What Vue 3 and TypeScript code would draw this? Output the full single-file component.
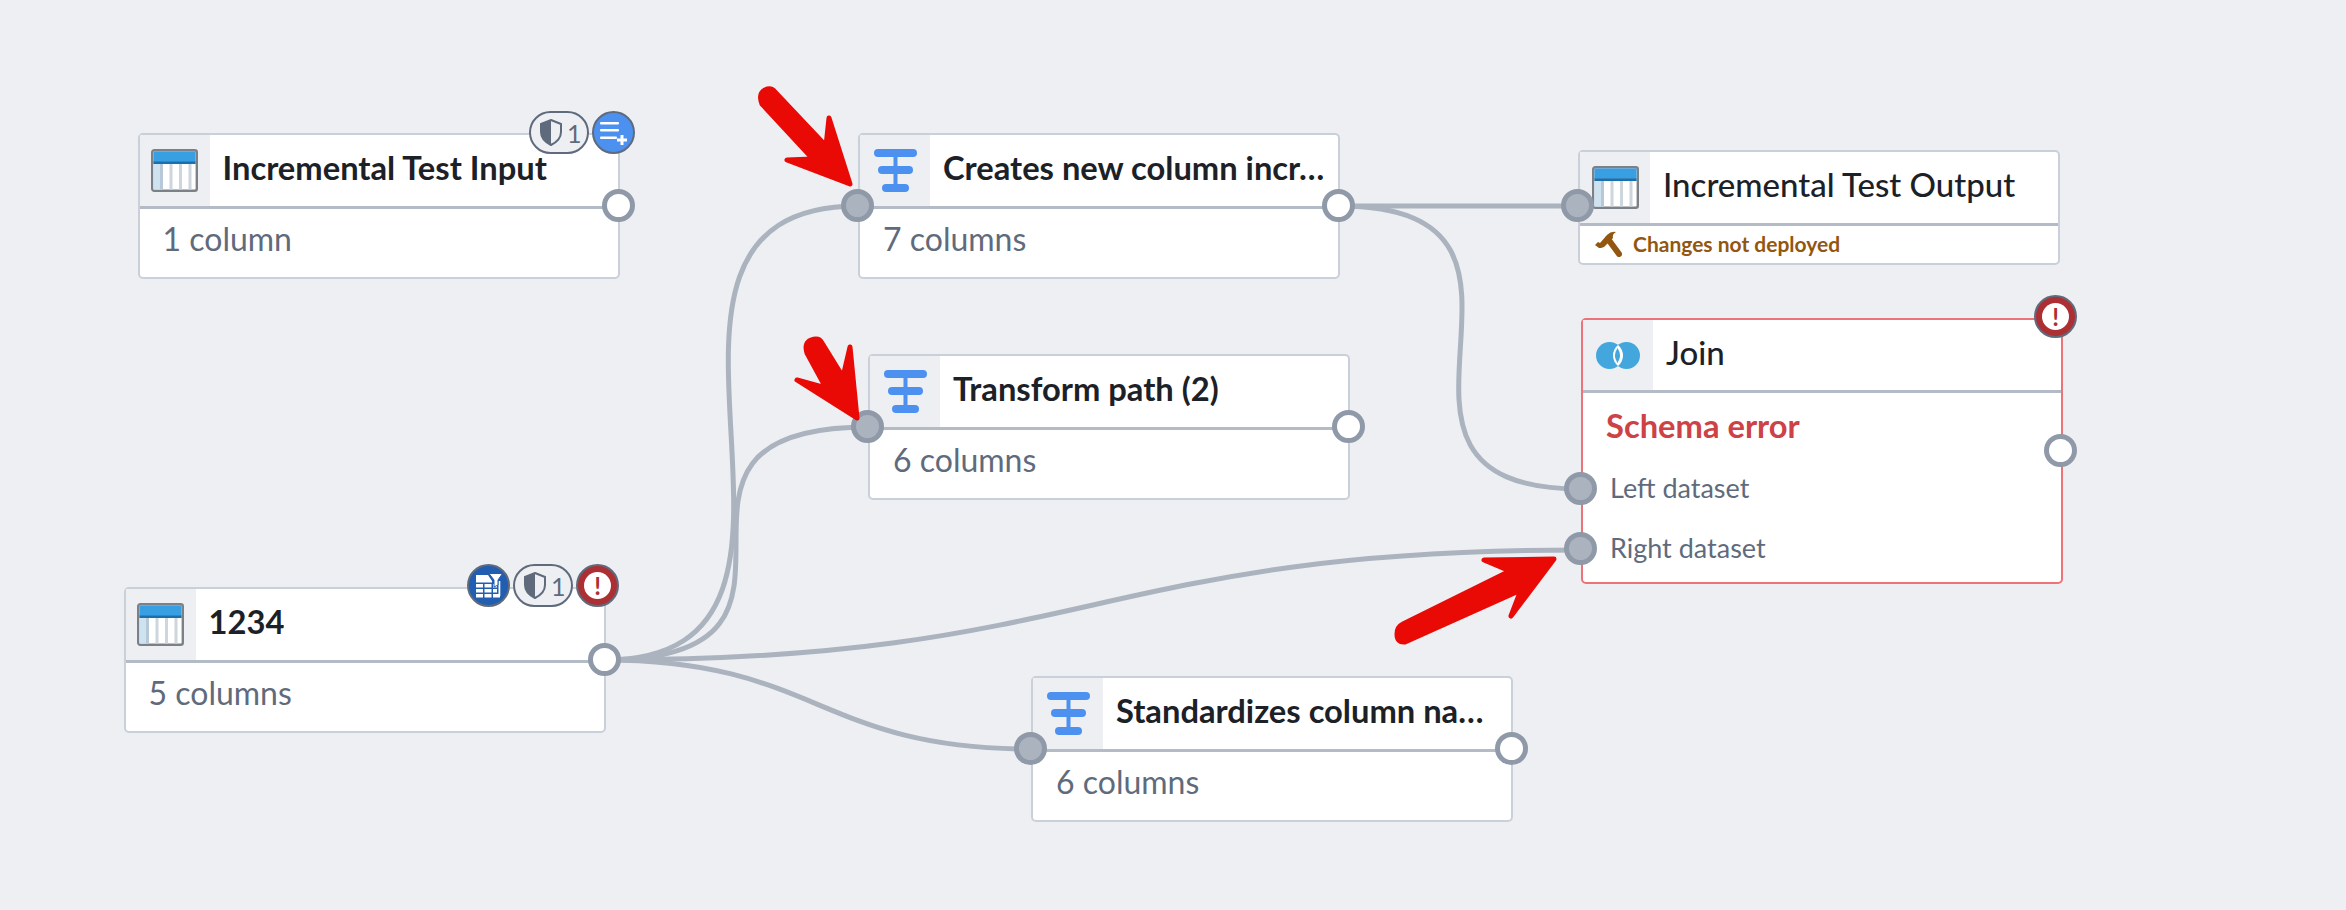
<script setup lang="ts">
// Pipeline graph: node cards sit on a free canvas, edges are drawn below them
type PortKind = 'in' | 'out'

interface Port {
  kind: PortKind
  x: number
  y: number
}

interface GraphNode {
  id: string
  title: string
  icon: 'table' | 'transform'
  x: number
  y: number
  body: string
  ports: Port[]
}

const nodes: GraphNode[] = [
  { id: 'input', title: 'Incremental Test Input', icon: 'table', x: 137.5, y: 133, body: '1 column', ports: [{ kind: 'out', x: 481, y: 73 }] },
  { id: 'creates', title: 'Creates new column incr…', icon: 'transform', x: 858, y: 133, body: '7 columns', ports: [{ kind: 'in', x: 0, y: 73 }, { kind: 'out', x: 481, y: 73 }] },
  { id: 'path', title: 'Transform path (2)', icon: 'transform', x: 868, y: 354, body: '6 columns', ports: [{ kind: 'in', x: 0, y: 73 }, { kind: 'out', x: 481, y: 73 }] },
  { id: 'raw', title: '1234', icon: 'table', x: 123.5, y: 587, body: '5 columns', ports: [{ kind: 'out', x: 481, y: 73 }] },
  { id: 'names', title: 'Standardizes column na…', icon: 'transform', x: 1031, y: 676, body: '6 columns', ports: [{ kind: 'in', x: 0, y: 73 }, { kind: 'out', x: 481, y: 73 }] }
]

const edges: string[] = [
  'M604 660 C884 660 578 206 858 206',
  'M604 660 C868 660 604 427 868 427',
  'M604 660 C1093 660 1093 550 1581 550',
  'M604 660 C818 660 818 749 1031 749',
  'M1339 206 L1579 206',
  'M1339 206 C1600 206 1321 489 1581 489'
]

const arrows: string[] = [
  'M775 92 L826 146 L829 118 L850 184 L787 160 L813 159 L762 104 Q758 94 765 90 Q771 87 775 92 Z',
  'M822 343 L843 377 L850 347 L857 418 L797 380 L826 388 L807 353 Q804 343 811 340 Q819 337 822 343 Z',
  'M1510 571 L1484 560 L1554 559 L1511 616 L1521 590 L1405 642 Q1397 643 1397 634 Q1397 627 1403 624 Z'
]
</script>

<template>
  <div class="canvas">
    <svg class="edges" width="2346" height="910" viewBox="0 0 2346 910" fill="none">
      <path v-for="d in edges" :key="d" :d="d" class="edge" />
    </svg>

    <div
      v-for="n in nodes"
      :key="n.id"
      class="node"
      :style="{ left: n.x + 'px', top: n.y + 'px' }"
    >
      <div class="node-head">
        <div class="icon-cell">
          <svg v-if="n.icon === 'table'" width="47" height="43" viewBox="0 0 47 43">
            <rect x="1.2" y="1.2" width="44.6" height="40.6" rx="2" fill="#fff" stroke="#7c8087" stroke-width="2.4" />
            <rect x="2.4" y="15" width="9" height="25.6" fill="#cfe2f0" />
            <rect x="9" y="15" width="3" height="25.6" fill="#b7c9d8" />
            <rect x="18.5" y="15" width="3" height="25.6" fill="#cdd5dd" />
            <rect x="28" y="15" width="3" height="25.6" fill="#cdd5dd" />
            <rect x="37.5" y="15" width="3" height="25.6" fill="#cdd5dd" />
            <rect x="2.4" y="2.4" width="42.2" height="10" fill="#389fe3" />
            <rect x="2.4" y="12.2" width="42.2" height="2.8" fill="#1a6fae" />
          </svg>
          <svg v-else width="43" height="43" viewBox="0 0 43 43" fill="#4c90f0">
            <rect x="0" y="0" width="43" height="8" rx="4" />
            <rect x="4" y="17" width="35" height="8" rx="4" />
            <rect x="8" y="35" width="27" height="8" rx="4" />
            <rect x="19.5" y="4" width="4" height="35" />
          </svg>
        </div>
        <div class="title">{{ n.title }}</div>
      </div>
      <div class="node-body">{{ n.body }}</div>
      <span
        v-for="p in n.ports"
        :key="p.kind"
        class="port"
        :class="p.kind"
        :style="{ left: p.x + 'px', top: p.y + 'px' }"
      ></span>
    </div>

    <!-- output dataset, header plus deploy footer -->
    <div class="node output">
      <div class="node-head">
        <div class="icon-cell">
          <svg width="47" height="43" viewBox="0 0 47 43">
            <rect x="1.2" y="1.2" width="44.6" height="40.6" rx="2" fill="#fff" stroke="#7c8087" stroke-width="2.4" />
            <rect x="2.4" y="15" width="9" height="25.6" fill="#cfe2f0" />
            <rect x="9" y="15" width="3" height="25.6" fill="#b7c9d8" />
            <rect x="18.5" y="15" width="3" height="25.6" fill="#cdd5dd" />
            <rect x="28" y="15" width="3" height="25.6" fill="#cdd5dd" />
            <rect x="37.5" y="15" width="3" height="25.6" fill="#cdd5dd" />
            <rect x="2.4" y="2.4" width="42.2" height="10" fill="#389fe3" />
            <rect x="2.4" y="12.2" width="42.2" height="2.8" fill="#1a6fae" />
          </svg>
        </div>
        <div class="title medium">Incremental Test Output</div>
      </div>
      <div class="node-foot">
        <svg width="28" height="27" viewBox="0 0 28 27" fill="#935610">
          <path d="M1 15 L4 12 L6 13 L13 5 Q17 1 22 2 Q18 4 19 8 L15 12 L10 17 L7 18 L5 18 Z" />
          <line x1="14" y1="9" x2="25" y2="24" stroke="#935610" stroke-width="6" stroke-linecap="round" />
        </svg>
        <span>Changes not deployed</span>
      </div>
      <span class="port in" style="left: 0; top: 56px"></span>
    </div>

    <!-- join with schema error -->
    <div class="node join">
      <div class="node-head">
        <div class="icon-cell">
          <svg width="44" height="27" viewBox="0 0 44 27">
            <circle cx="13.5" cy="13.5" r="13.5" fill="#43a7dd" />
            <circle cx="30.5" cy="13.5" r="13.5" fill="#43a7dd" />
            <path d="M22 3 A13.5 13.5 0 0 1 22 24 A13.5 13.5 0 0 1 22 3 Z" fill="#fff" />
            <path d="M21.5 6 A13.5 13.5 0 0 1 21.5 21 A13.5 13.5 0 0 1 21.5 6 Z" fill="#43a7dd" />
          </svg>
        </div>
        <div class="title medium">Join</div>
      </div>
      <div class="join-body">
        <div class="schema-error">Schema error</div>
        <div class="input-row">Left dataset</div>
        <div class="input-row">Right dataset</div>
      </div>
      <span class="port in" style="left: 0; top: 171px"></span>
      <span class="port in" style="left: 0; top: 231px"></span>
      <span class="port out" style="left: 480px; top: 133px"></span>
      <span class="badge danger corner"><i>!</i></span>
    </div>

    <!-- status badges over the node corners -->
    <div class="badges" style="left: 529px; top: 111px">
      <span class="pill">
        <svg width="22" height="27" viewBox="0 0 22 27">
          <path d="M11 1 L21 5 V13 Q21 21 11 26 Q1 21 1 13 V5 Z" fill="none" stroke="#5f6b7c" stroke-width="2" />
          <path d="M11 1 V26 Q1 21 1 13 V5 Z" fill="#5f6b7c" />
        </svg>
        <span>1</span>
      </span>
      <span class="badge info">
        <svg width="39" height="39" viewBox="0 0 39 39" fill="#fff">
          <rect x="6" y="9" width="19" height="2.6" rx="1" />
          <rect x="6" y="16" width="19" height="2.6" rx="1" />
          <rect x="6" y="23.5" width="17" height="2.6" rx="1" />
          <path d="M26.5 22 h3 v3.5 h3.5 v3 h-3.5 v3.5 h-3 v-3.5 h-3.5 v-3 h3.5 Z" />
        </svg>
      </span>
    </div>

    <div class="badges" style="left: 467px; top: 564px">
      <span class="badge dark">
        <svg width="28" height="28" viewBox="0 0 28 28" fill="#fff">
          <path d="M1 3 H13 L17 9 V10.5 H1 Z" />
          <path d="M1 12 H8 V15.5 H1 Z M9.5 12 H16.5 V15.5 H9.5 Z M18 12 H22 V15.5 H18 Z" />
          <path d="M1 17 H8 V20.5 H1 Z M9.5 17 H16.5 V20.5 H9.5 Z M18 17 H22 V20.5 H18 Z" />
          <path d="M1 22 H8 V25.5 H1 Z M9.5 22 H16.5 V25.5 H9.5 Z M18 22 H25 V25.5 H18 Z" />
          <rect x="23.5" y="9" width="1.8" height="15" />
          <path d="M14 1.5 H27.5 L23 8 V13 L19 15 V8 Z" stroke="#215db0" stroke-width="1" />
        </svg>
      </span>
      <span class="pill">
        <svg width="22" height="27" viewBox="0 0 22 27">
          <path d="M11 1 L21 5 V13 Q21 21 11 26 Q1 21 1 13 V5 Z" fill="none" stroke="#5f6b7c" stroke-width="2" />
          <path d="M11 1 V26 Q1 21 1 13 V5 Z" fill="#5f6b7c" />
        </svg>
        <span>1</span>
      </span>
      <span class="badge danger"><i>!</i></span>
    </div>

    <svg class="arrows" width="2346" height="910" viewBox="0 0 2346 910">
      <path v-for="d in arrows" :key="d" :d="d" class="arrow" />
    </svg>
  </div>
</template>

<style>
html,
body {
  margin: 0;
  background: #edeff3;
}
</style>

<style scoped>
.canvas {
  position: relative;
  width: 2346px;
  height: 910px;
  background: #edeff3;
  overflow: hidden;
  font-family: Lato, "Noto Sans", sans-serif;
}

.edges,
.arrows {
  position: absolute;
  left: 0;
  top: 0;
}

.arrows {
  pointer-events: none;
}

.edge {
  stroke: #abb3bf;
  stroke-width: 5;
}

.arrow {
  fill: #ea0a05;
  stroke: #ea0a05;
  stroke-width: 5;
  stroke-linejoin: round;
}

.node {
  position: absolute;
  box-sizing: border-box;
  width: 482px;
  height: 146px;
  background: #fff;
  border: 2.5px solid #c9d0d9;
  border-radius: 5px;
}

.node.output {
  left: 1578px;
  top: 150px;
  height: 115px;
}

.node.join {
  left: 1581px;
  top: 318px;
  height: 266px;
  border-color: #ec7377;
}

.node.join .node-head {
  height: 70px;
}

.node-head {
  display: flex;
  height: 71px;
  border-bottom: 3px solid #b3bbc7;
}

.icon-cell {
  flex: none;
  width: 70px;
  display: flex;
  align-items: center;
  justify-content: center;
  background: #edeff3;
}

.title {
  flex: 1;
  min-width: 0;
  padding: 0 13px;
  line-height: 65px;
  font-size: 32.7px;
  font-weight: 700;
  color: #1c2127;
  white-space: nowrap;
}

.title.medium {
  font-size: 33px;
  font-weight: 500;
}

.node-body {
  padding: 0 23px;
  line-height: 60px;
  font-size: 32px;
  color: #5f6b7c;
}

.node-foot {
  display: flex;
  align-items: center;
  gap: 11px;
  height: 35px;
  padding-left: 14px;
  font-size: 21px;
  font-weight: 700;
  color: #935610;
}

.join-body {
  padding: 0 0 0 23px;
}

.schema-error {
  line-height: 65px;
  font-size: 32.7px;
  font-weight: 700;
  color: #cd4246;
}

.input-row {
  padding-left: 4px;
  line-height: 60px;
  font-size: 27px;
  color: #5f6b7c;
}

.port {
  position: absolute;
  box-sizing: border-box;
  width: 33px;
  height: 33px;
  margin: -19px 0 0 -19px;
  border: 5px solid #8f99a8;
  border-radius: 50%;
}

.port.in {
  background: #abb3bf;
}

.port.out {
  background: #fff;
}

.badges {
  position: absolute;
  display: flex;
  gap: 3px;
}

.badge {
  box-sizing: border-box;
  width: 43px;
  height: 43px;
  display: flex;
  align-items: center;
  justify-content: center;
  border: 2px solid #5f6b7c;
  border-radius: 50%;
}

.badge.corner {
  position: absolute;
  left: 451px;
  top: -25px;
}

.badge.info {
  background: #4c90f0;
}

.badge.dark {
  background: #215db0;
}

.badge.danger {
  background: #ac2f33;
}

.badge.danger i {
  width: 27px;
  height: 27px;
  border-radius: 50%;
  background: #fff;
  color: #ac2f33;
  text-align: center;
  font-style: normal;
  font-weight: 700;
  font-size: 24px;
  line-height: 27px;
}

.pill {
  box-sizing: border-box;
  width: 60px;
  height: 43px;
  display: flex;
  align-items: center;
  gap: 5px;
  padding-left: 9px;
  border: 2px solid #5f6b7c;
  border-radius: 22px;
  background: #edeff3;
  font-size: 25px;
  color: #5f6b7c;
}
</style>
